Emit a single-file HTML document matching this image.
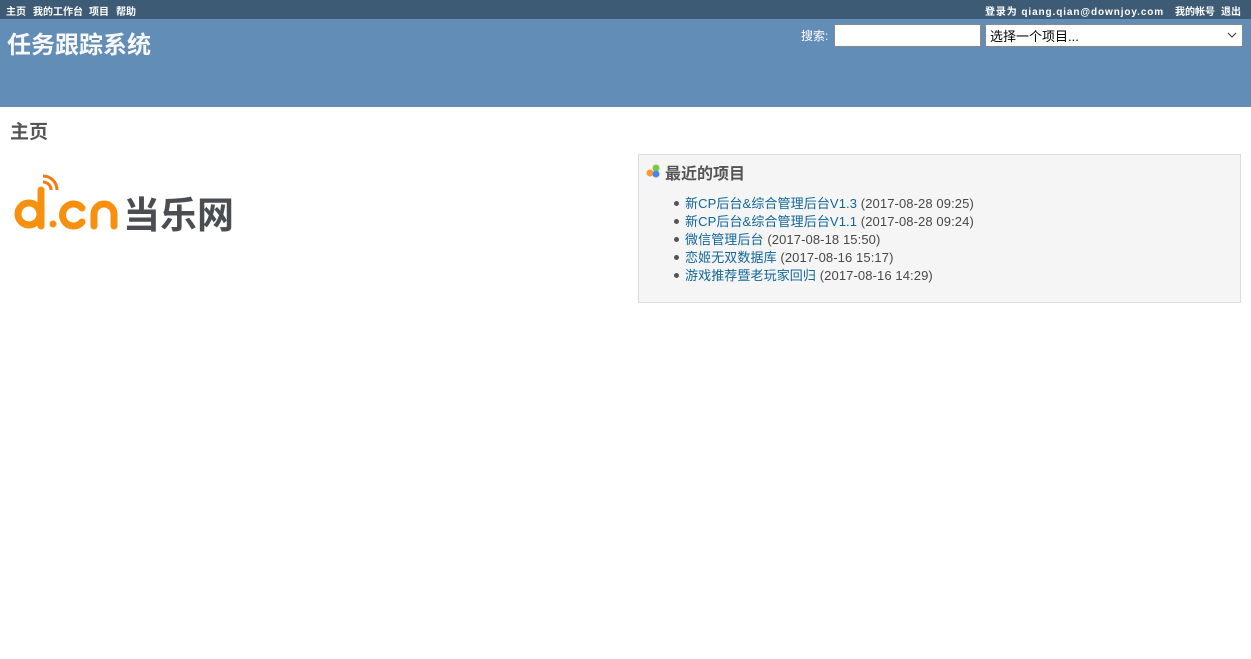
<!DOCTYPE html>
<html><head><meta charset="utf-8"><style>
*{margin:0;padding:0;box-sizing:border-box}
body{width:1251px;height:659px;background:#fff;font-family:"Liberation Sans","Noto Sans CJK SC",sans-serif;font-size:12px;color:#484848;position:relative;overflow:hidden}
#top{position:absolute;left:0;top:0;width:1251px;height:19px;background:#3e5b76;color:#fff;font-size:10px;font-weight:bold}
#top span{position:absolute;top:3px;white-space:nowrap}
#hdr{position:absolute;left:0;top:19px;width:1251px;height:88px;background:#628db6;color:#f8f8f8}
#hdr h1{position:absolute;left:7px;top:6px;font-size:24px;font-weight:bold}
#lbl{position:absolute;left:801px;top:8px;font-size:12px;color:#fff}
#q{position:absolute;left:834px;top:5px;width:147px;height:23px;background:#fff;border:1px solid #888}
#sel{position:absolute;left:985px;top:5px;width:258px;height:23px;background:#fff;border:1px solid #888;color:#000;font-size:13px;padding:1px 0 0 4px}
h2{position:absolute;left:10px;top:117px;font-size:19px;font-weight:bold;color:#555}
#box{position:absolute;left:638px;top:154px;width:603px;height:149px;background:#f5f5f5;border:1px solid #dcdcdc}
#box h3{position:absolute;left:26px;top:5px;font-size:16px;font-weight:bold;color:#555}
#box ul{position:absolute;left:46px;top:40px;list-style:none;font-size:13px;line-height:18px;letter-spacing:0.1px}
#box li:before{content:"";display:inline-block;width:5px;height:5px;border-radius:50%;background:#555;margin:0 6px 2px -11px;vertical-align:middle}
#box a{color:#169;text-decoration:none}
</style></head><body>
<div id="top"><span style="left:6px">主页</span><span style="left:33px">我的工作台</span><span style="left:89px">项目</span><span style="left:116px">帮助</span>
<span style="left:985px;letter-spacing:0.9px">登录为 qiang.qian@downjoy.com</span><span style="left:1175px">我的帐号</span><span style="left:1221px">退出</span></div>
<div id="hdr"><h1>任务跟踪系统</h1><div id="lbl">搜索:</div><div id="q"></div><div id="sel">选择一个项目...<svg style="position:absolute;right:5px;top:7px" width="10" height="6"><path d="M1 1l4 4 4-4" stroke="#333" fill="none"/></svg></div></div>
<h2>主页</h2>
<svg style="position:absolute;left:12px;top:170px" width="230" height="62">
<path d="M31 6a14 14 0 0 1 14 14M31 12a8 8 0 0 1 8 8" stroke="#f47a10" stroke-width="3" fill="none"/>
<circle cx="17" cy="44" r="11" stroke="#f7900f" stroke-width="7" fill="none"/><path d="M29 20v36" stroke="#f7900f" stroke-width="7" stroke-linecap="round"/>
<circle cx="41" cy="54" r="3.5" fill="#f7900f"/>
<path d="M70 38a11 11 0 1 0 0 14" stroke="#f7900f" stroke-width="7" fill="none" stroke-linecap="round"/>
<path d="M82 56V44a10 10 0 0 1 20 0v12" stroke="#f7900f" stroke-width="7" fill="none" stroke-linecap="round"/>
<text x="111" y="58" font-size="37" font-weight="bold" fill="#4a4e52" font-family="Noto Sans CJK SC,sans-serif">当乐网</text></svg>
<div id="box">
<svg style="position:absolute;left:7px;top:9px" width="15" height="15"><circle cx="10" cy="4" r="3.5" fill="#7c4"/><circle cx="4" cy="9" r="3.5" fill="#f93"/><circle cx="10" cy="10" r="3.5" fill="#48e"/></svg>
<h3>最近的项目</h3>
<ul>
<li><a>新CP后台&amp;综合管理后台V1.3</a> (2017-08-28 09:25)</li>
<li><a>新CP后台&amp;综合管理后台V1.1</a> (2017-08-28 09:24)</li>
<li><a>微信管理后台</a> (2017-08-18 15:50)</li>
<li><a>恋姬无双数据库</a> (2017-08-16 15:17)</li>
<li><a>游戏推荐暨老玩家回归</a> (2017-08-16 14:29)</li>
</ul></div>
</body></html>
